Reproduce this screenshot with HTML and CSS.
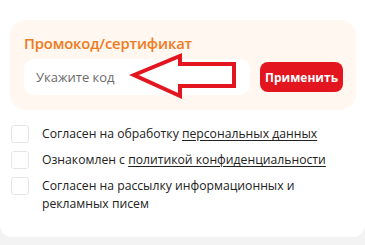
FILE: index.html
```html
<!DOCTYPE html>
<html lang="ru">
<head>
<meta charset="utf-8">
<link rel="stylesheet" href="styles.css">
</head>
<body>
<div class="card">
  <section class="promo">
    <h2 class="promo-title">Промокод/сертификат</h2>
    <div class="promo-row">
      <div class="promo-input">Укажите код</div>
      <button class="promo-btn">Применить</button>
    </div>
    <svg class="arrow" width="112" height="50" viewBox="0 0 112 50">
      <polygon points="6,22 52,3 52,11 106,11 106,33 52,33 52,43" fill="#fff" stroke="#e3161f" stroke-width="4" stroke-linejoin="miter"/>
    </svg>
  </section>
  <ul class="checks">
    <li class="check"><span class="box"></span><span class="label">Согласен на обработку <u>персональных данных</u></span></li>
    <li class="check"><span class="box"></span><span class="label">Ознакомлен с <u>политикой конфиденциальности</u></span></li>
    <li class="check"><span class="box"></span><span class="label">Согласен на рассылку информационных и рекламных писем</span></li>
  </ul>
</div>
</body>
</html>
```
FILE: styles.css
```css
html, body {
  margin: 0;
  padding: 0;
}
body {
  width: 365px;
  height: 245px;
  background: #f3f3f3;
  font-family: "Open Sans", "Liberation Sans", sans-serif;
  overflow: hidden;
}
.card {
  background: #fff;
  height: 237px;
  border-radius: 0 0 12px 12px;
  padding: 20px 9px 0 10px;
  box-sizing: border-box;
}
.promo {
  position: relative;
  background: #fff7f0;
  border-radius: 16px;
  height: 90px;
  padding: 12px 13px 0 14px;
  box-sizing: border-box;
}
.promo-title {
  margin: 0;
  font-size: 14.8px;
  font-weight: 600;
  color: #f07a1c;
  line-height: 22px;
  letter-spacing: -0.15px;
}
.promo-row {
  display: flex;
  align-items: center;
  margin-top: 5px;
}
.promo-input {
  width: 226px;
  height: 36px;
  background: #fff;
  border-radius: 10px;
  box-sizing: border-box;
  padding-left: 12px;
  display: flex;
  align-items: center;
  font-size: 13px;
  color: #6b6b6b;
}
.promo-btn {
  margin-left: 10px;
  width: 83px;
  height: 30px;
  border: 0;
  border-radius: 8px;
  background: #e3161f;
  color: #fff;
  font-family: inherit;
  font-size: 12px;
  font-weight: 700;
  padding: 0;
}
.arrow {
  position: absolute;
  left: 118px;
  top: 33px;
}
.checks {
  list-style: none;
  margin: 15px 0 0 0;
  padding: 0 0 0 1px;
  display: flex;
  flex-direction: column;
  gap: 8px;
}
.check {
  display: flex;
  align-items: flex-start;
  gap: 13px;
}
.box {
  flex: none;
  width: 16px;
  height: 16px;
  border: 1px solid #e6e6e6;
  border-radius: 3px;
  background: #fff;
}
.label {
  font-size: 12.2px;
  line-height: 18px;
  color: #222;
  width: 300px;
}
.label u {
  text-underline-offset: 2px;
}
```
